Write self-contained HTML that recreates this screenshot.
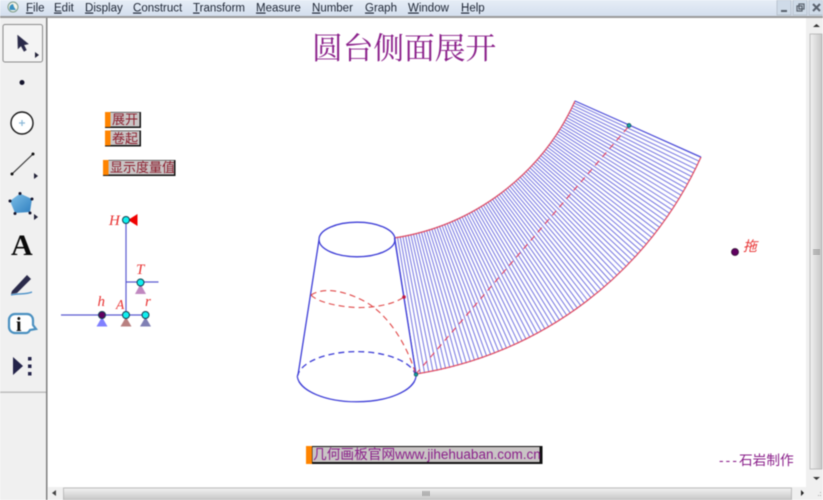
<!DOCTYPE html>
<html>
<head>
<meta charset="utf-8">
<style>
html,body{margin:0;padding:0;width:823px;height:500px;overflow:hidden;background:#fff}
svg{display:block;filter:blur(.4px)}
.m{font:11.5px "Liberation Sans",sans-serif;fill:#1c2433}
.b{font:13px "Liberation Sans","Noto Sans CJK SC",sans-serif;fill:#8a1c2c}
.l{font:italic 15px "Liberation Serif",serif;fill:#e83030}
</style>
</head>
<body>
<svg width="823" height="500" viewBox="0 0 823 500" xmlns="http://www.w3.org/2000/svg">
<defs>
<linearGradient id="mg" x1="0" y1="0" x2="0" y2="1"><stop offset="0" stop-color="#e6edf6"/><stop offset="1" stop-color="#d4dfee"/></linearGradient>
<linearGradient id="sb" x1="0" y1="0" x2="0" y2="1"><stop offset="0" stop-color="#f2f2f2"/><stop offset=".5" stop-color="#dcdcdc"/><stop offset="1" stop-color="#c6c6c6"/></linearGradient>
<linearGradient id="sv" x1="0" y1="0" x2="1" y2="0"><stop offset="0" stop-color="#f2f2f2"/><stop offset=".5" stop-color="#dcdcdc"/><stop offset="1" stop-color="#c6c6c6"/></linearGradient>
<linearGradient id="pg" x1="0" y1="0" x2="1" y2="1"><stop offset="0" stop-color="#7fc0e8"/><stop offset="1" stop-color="#2f7fc0"/></linearGradient>
</defs>

<!-- menu bar -->
<rect x="0" y="0" width="823" height="16" fill="url(#mg)"/>
<rect x="0" y="16" width="823" height="2" fill="#9a9a9a"/>
<circle cx="13" cy="7" r="5" fill="#f4f4e8" stroke="#7a9a8a"/>
<path d="M10 10a4 4 0 0 1 3-6l1 3 2 3z" fill="#3a90c0"/>
<text class="m" x="26" y="11.500"><tspan text-decoration="underline">F</tspan>ile</text>
<text class="m" x="54" y="11.500"><tspan text-decoration="underline">E</tspan>dit</text>
<text class="m" x="85" y="11.500"><tspan text-decoration="underline">D</tspan>isplay</text>
<text class="m" x="133" y="11.500"><tspan text-decoration="underline">C</tspan>onstruct</text>
<text class="m" x="193" y="11.500"><tspan text-decoration="underline">T</tspan>ransform</text>
<text class="m" x="256" y="11.500"><tspan text-decoration="underline">M</tspan>easure</text>
<text class="m" x="312" y="11.500"><tspan text-decoration="underline">N</tspan>umber</text>
<text class="m" x="365" y="11.500"><tspan text-decoration="underline">G</tspan>raph</text>
<text class="m" x="408" y="11.500"><tspan text-decoration="underline">W</tspan>indow</text>
<text class="m" x="461" y="11.500"><tspan text-decoration="underline">H</tspan>elp</text>

<!-- window buttons -->
<rect x="777" y="0" width="14" height="15" fill="#cfdbe8" stroke="#aeb8c4" stroke-width=".7"/>
<rect x="793" y="0" width="14" height="15" fill="#cfdbe8" stroke="#aeb8c4" stroke-width=".7"/>
<rect x="809" y="0" width="14" height="15" fill="#cfdbe8" stroke="#aeb8c4" stroke-width=".7"/>
<rect x="781" y="10" width="6" height="2" fill="#58606c"/>
<rect x="797" y="6" width="5" height="5" fill="none" stroke="#58606c" stroke-width="1.200"/>
<rect x="799" y="4" width="5" height="5" fill="none" stroke="#58606c" stroke-width="1.200"/>
<path d="M813 4l7 7M820 4l-7 7" stroke="#58606c" stroke-width="2"/>

<!-- toolbox -->
<rect x="0" y="18" width="46" height="482" fill="#f0f0f0"/>
<rect x="46" y="18" width="1.500" height="482" fill="#7f7f7f"/>
<rect x="3" y="24.500" width="39.500" height="37.500" rx="2" fill="#f4f4f4" stroke="#8a8a8a" stroke-width="1"/>
<path d="M17.500 35l11 9-4.500 1 2.500 5-2.500 1.500-3-5.500-3 3z" fill="#2a2a4a" stroke="#55556a" stroke-width=".5"/>
<path d="M35 52l4 3-4 3z" fill="#222238"/>
<circle cx="22" cy="82.500" r="2.500" fill="#14142c"/>
<circle cx="22" cy="123" r="11" fill="#fff" stroke="#1a1a1a" stroke-width="1.400"/>
<path d="M22 120v6M19 123h6" stroke="#8ab8d8" stroke-width="1.200"/>
<path d="M12 174l21-20" stroke="#333" stroke-width="1.200"/>
<circle cx="12" cy="174" r="1.500" fill="#111"/><circle cx="33" cy="154" r="1.500" fill="#111"/>
<path d="M34 173l4 3-4 3z" fill="#222238"/>
<path d="M20 193.500l12 5.500-2 13-15 1-5-12z" fill="url(#pg)"/>
<g fill="#14142c"><circle cx="20" cy="193.500" r="1.500"/><circle cx="32" cy="199" r="1.500"/><circle cx="30" cy="213" r="1.500"/><circle cx="15" cy="213.500" r="1.500"/><circle cx="10" cy="201" r="1.500"/></g>
<path d="M34 214l4 3-4 3z" fill="#222238"/>
<text x="11" y="255" style="font:bold 30px 'Liberation Serif',serif" fill="#0a0a0a">A</text>
<path d="M12 291L27 275L31 279L17 293L11 294z" fill="#2a2a4a"/>
<path d="M11 295C18 293 25 295 32 292" stroke="#4a90c8" stroke-width="1.300" fill="none"/>
<path d="M15 314h12a6 6 0 0 1 6 6v5l3 4-6 1c-1 2-2 3-4 3H15a6 6 0 0 1-6-6v-7a6 6 0 0 1 6-6z" fill="#fff" stroke="#4a90c0" stroke-width="2.200"/>
<text x="16" y="331" style="font:bold 20px 'Liberation Serif',serif" fill="#111">i</text>
<path d="M13 357l10 9-10 9z" fill="#24244a"/>
<g fill="#24244a"><rect x="28" y="357" width="3.500" height="3.500"/><rect x="28" y="364.500" width="3.500" height="3.500"/><rect x="28" y="372" width="3.500" height="3.500"/></g>
<rect x="0" y="391.500" width="46" height="1.500" fill="#bdbdbd"/>

<!-- scrollbars -->
<rect x="806" y="18" width="17" height="469" fill="#f0f0f0"/>
<rect x="810" y="34" width="12" height="435" fill="url(#sv)" stroke="#aaa" stroke-width=".7"/>
<path d="M813 27l3.500-3 3.500 3z" fill="#333"/>
<path d="M813 477l3.500 3 3.500-3z" fill="#333"/>
<path d="M813 250h7M813 252h7M813 254h7" stroke="#777" stroke-width=".7"/>
<rect x="48" y="487" width="775" height="13" fill="#f0f0f0"/>
<rect x="63.500" y="488" width="728" height="12" fill="url(#sb)" stroke="#aaa" stroke-width=".7"/>
<path d="M56 490v6l-4-3z" fill="#444"/>
<path d="M801 490v6l3-3z" fill="#222"/>
<path d="M423 491v5M425 491v5M427 491v5M429 491v5" stroke="#777" stroke-width=".8"/>
<g fill="#aaa"><rect x="820" y="492" width="1" height="1"/><rect x="818" y="495" width="1" height="1"/><rect x="820" y="495" width="1" height="1"/></g>

<!-- title -->
<text x="312" y="59" style="font:30.700px 'Noto Serif CJK SC','Liberation Serif',serif" fill="#8a1f8a">圆台侧面展开</text>

<!-- action buttons -->
<g>
<rect x="105" y="112" width="36" height="16" fill="#111"/><rect x="105" y="112" width="5.500" height="15" fill="#ff8400"/><rect x="110.500" y="112.500" width="29" height="14" fill="#c9c5c5"/>
<text class="b" x="112" y="124">展开</text>
<rect x="105" y="130.500" width="36" height="16" fill="#111"/><rect x="105" y="130.500" width="5.500" height="15" fill="#ff8400"/><rect x="110.500" y="131" width="29" height="14" fill="#c9c5c5"/>
<text class="b" x="112" y="143">卷起</text>
<rect x="103" y="160" width="72.500" height="16" fill="#111"/><rect x="103" y="160" width="5.500" height="15" fill="#ff8400"/><rect x="108.500" y="160.500" width="65.500" height="14" fill="#c9c5c5"/>
<text class="b" x="110" y="172">显示度量值</text>
</g>

<!-- slider widget -->
<g stroke="#5a5ad0" stroke-width="1.200" fill="none">
<path d="M126 220V315M61 315H145.500M126 282H158.500"/>
</g>
<path d="M128 220l9.500-6v12z" fill="#f00000"/>
<path d="M102 317l5.500 9.500h-11z" fill="#8080ff"/>
<path d="M126 317l5.500 9.500h-11z" fill="#b88080"/>
<path d="M145.500 317l5.500 9.500h-11z" fill="#8080b4"/>
<path d="M140.500 284l5.500 10h-11z" fill="#c088c0"/>
<g stroke="#104050" stroke-width="1">
<circle cx="126" cy="220" r="3.500" fill="#10f0f0"/>
<circle cx="140.500" cy="282.500" r="3.500" fill="#10f0f0"/>
<circle cx="126" cy="315" r="3.500" fill="#10f0f0"/>
<circle cx="145.500" cy="315" r="3.500" fill="#10f0f0"/>
<circle cx="102" cy="315" r="3.500" fill="#600060"/>
</g>
<text class="l" x="109" y="225">H</text>
<text class="l" x="136" y="274">T</text>
<text class="l" x="97.500" y="306">h</text>
<text class="l" x="116" y="309" style="font-size:13.500px">A</text>
<text class="l" x="145" y="306">r</text>

<!-- sector hatching -->
<path d="M405 306A307 307 0 0 0 638 129" fill="none" stroke="#7474e0" stroke-width="139" stroke-dasharray="1 2.500"/>
<path d="M416 374A376 376 0 0 0 701 157" fill="none" stroke="#e04a60" stroke-width="1.200"/>
<path d="M394 238A238 238 0 0 0 575 101" fill="none" stroke="#e04a60" stroke-width="1.200"/>
<path d="M575 101L701 157" stroke="#4a4ad8" stroke-width="1.100"/>
<path d="M416 374L629 126" stroke="#e04060" stroke-width="1.100" stroke-dasharray="6 5" fill="none"/>

<!-- frustum -->
<g fill="none" stroke="#3c3cd6" stroke-width="1.300">
<ellipse cx="357" cy="239.500" rx="38" ry="17.300" fill="#fff"/>
<path d="M319 240L298 375M394.500 238L416 374"/>
<path d="M297.300 376.700A59.500 27 0 0 0 416 376.700"/>
<path d="M297.300 376.700A59.500 27 0 0 1 416 376.700" stroke-dasharray="6 4"/>
</g>
<g fill="none" stroke="#e04848" stroke-width="1.100" stroke-dasharray="6 4">
<path d="M311 295C318 303 345 308 362 307.500C380 307 396 303 404 297"/>
<path d="M311 295C322 288 340 289 362 300C385 311 405 340 415 372"/>
</g>
<circle cx="404" cy="297" r="1.800" fill="#c01840"/>
<circle cx="416" cy="374.500" r="1.800" fill="#10a0a0" stroke="#104050" stroke-width=".7"/>
<circle cx="629" cy="125.500" r="2" fill="#10a0a0" stroke="#104050" stroke-width=".7"/>

<!-- drag point -->
<circle cx="735" cy="252" r="3.500" fill="#600060" stroke="#301030" stroke-width=".8"/>
<text x="743" y="251" style="font:italic 14px 'Noto Sans CJK SC','Liberation Serif',sans-serif" fill="#e83030">拖</text>

<!-- footer link -->
<rect x="306" y="446" width="236.500" height="18" fill="#111"/>
<rect x="306" y="446" width="6" height="18" fill="#ff8400"/>
<rect x="312.500" y="447" width="227" height="15" fill="#c9c5c5"/>
<text x="313" y="459" style="font:13.700px 'Liberation Sans','Noto Sans CJK SC',sans-serif" fill="#8a1f8a">几何画板官网<tspan style="font-size:13.500px">www.jihehuaban.com.cn</tspan></text>

<text x="719" y="465" style="font:13.700px 'Liberation Sans','Noto Sans CJK SC',sans-serif" fill="#8a1f8a"><tspan letter-spacing="2.100">---</tspan>石岩制作</text>
</svg>
</body>
</html>
